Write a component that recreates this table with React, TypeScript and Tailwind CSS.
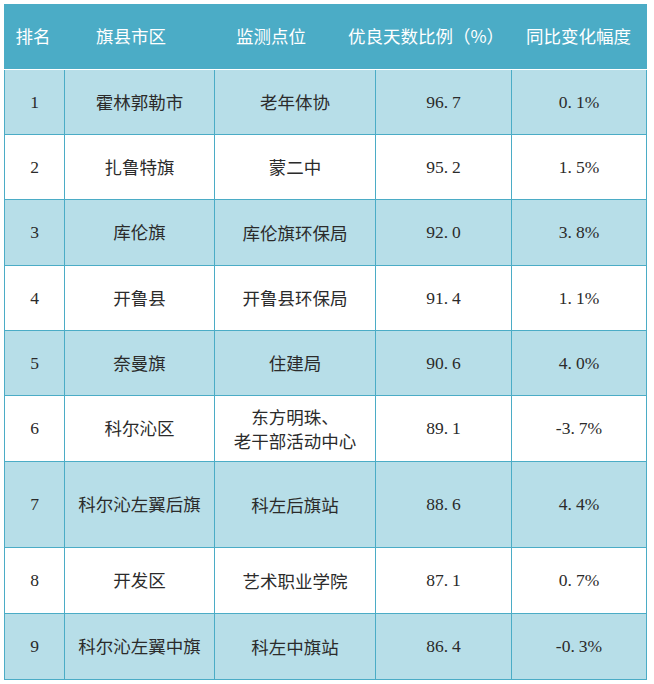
const rows = [
  { rank: '1', area: '霍林郭勒市', site: ['老年体协'], ratio: '96.7', change: '0.1%', h: 'h-[65px]' },
  { rank: '2', area: '扎鲁特旗', site: ['蒙二中'], ratio: '95.2', change: '1.5%', h: 'h-[65px]' },
  { rank: '3', area: '库伦旗', site: ['库伦旗环保局'], ratio: '92.0', change: '3.8%', h: 'h-[66px]' },
  { rank: '4', area: '开鲁县', site: ['开鲁县环保局'], ratio: '91.4', change: '1.1%', h: 'h-[65px]' },
  { rank: '5', area: '奈曼旗', site: ['住建局'], ratio: '90.6', change: '4.0%', h: 'h-[65px]' },
  { rank: '6', area: '科尔沁区', site: ['东方明珠、', '老干部活动中心'], ratio: '89.1', change: '-3.7%', h: 'h-[66px]' },
  { rank: '7', area: '科尔沁左翼后旗', site: ['科左后旗站'], ratio: '88.6', change: '4.4%', h: 'h-[86px]' },
  { rank: '8', area: '开发区', site: ['艺术职业学院'], ratio: '87.1', change: '0.7%', h: 'h-[66px]' },
  { rank: '9', area: '科尔沁左翼中旗', site: ['科左中旗站'], ratio: '86.4', change: '-0.3%', h: 'h-[66px]' },
];

const cjk = "font-['Noto_Sans_CJK_SC',sans-serif]";
const num = "font-['Liberation_Serif','Noto_Sans_CJK_SC',serif]";

function Num({ value }: { value: string }) {
  const [a, b] = value.split('.');
  return (
    <span>
      {a}
      <span className="mr-[4px]">.</span>
      {b}
    </span>
  );
}

function Cell({ w, children, className = '' }: { w: string; children: React.ReactNode; className?: string }) {
  return (
    <div className={`${w} flex flex-col items-center justify-center border-r border-[#4bacc6] text-center ${className}`}>
      {children}
    </div>
  );
}

export default function App() {
  return (
    <div className="bg-white pl-[4px] pt-[4px]">
      <div className="w-[643px] text-[17.5px] text-[#2b2b2b]">
        <div className={`flex h-[66px] items-center border-b border-white bg-[#4bacc6] text-white ${cjk}`}>
          <div className="w-[58px] text-center">排名</div>
          <div className="w-[138px] text-center">旗县市区</div>
          <div className="w-[142px] text-center">监测点位</div>
          <div className="w-[168px] text-center">优良天数比例（%）</div>
          <div className="w-[137px] text-center">同比变化幅度</div>
        </div>
        {rows.map((r, i) => (
          <div
            key={r.rank}
            className={`flex ${r.h} border-b border-l border-[#4bacc6] ${i % 2 === 0 ? 'bg-[#b7dee8]' : 'bg-white'}`}
          >
            <Cell w="w-[60px]" className={num}>{r.rank}</Cell>
            <Cell w="w-[150px]" className={cjk}>{r.area}</Cell>
            <Cell w="w-[161px]" className={`${cjk} leading-[24px]`}>
              {r.site.map((s) => (
                <div key={s}>{s}</div>
              ))}
            </Cell>
            <Cell w="w-[136px]" className={num}>
              <Num value={r.ratio} />
            </Cell>
            <Cell w="w-[135px]" className={num}>
              <Num value={r.change} />
            </Cell>
          </div>
        ))}
      </div>
    </div>
  );
}
